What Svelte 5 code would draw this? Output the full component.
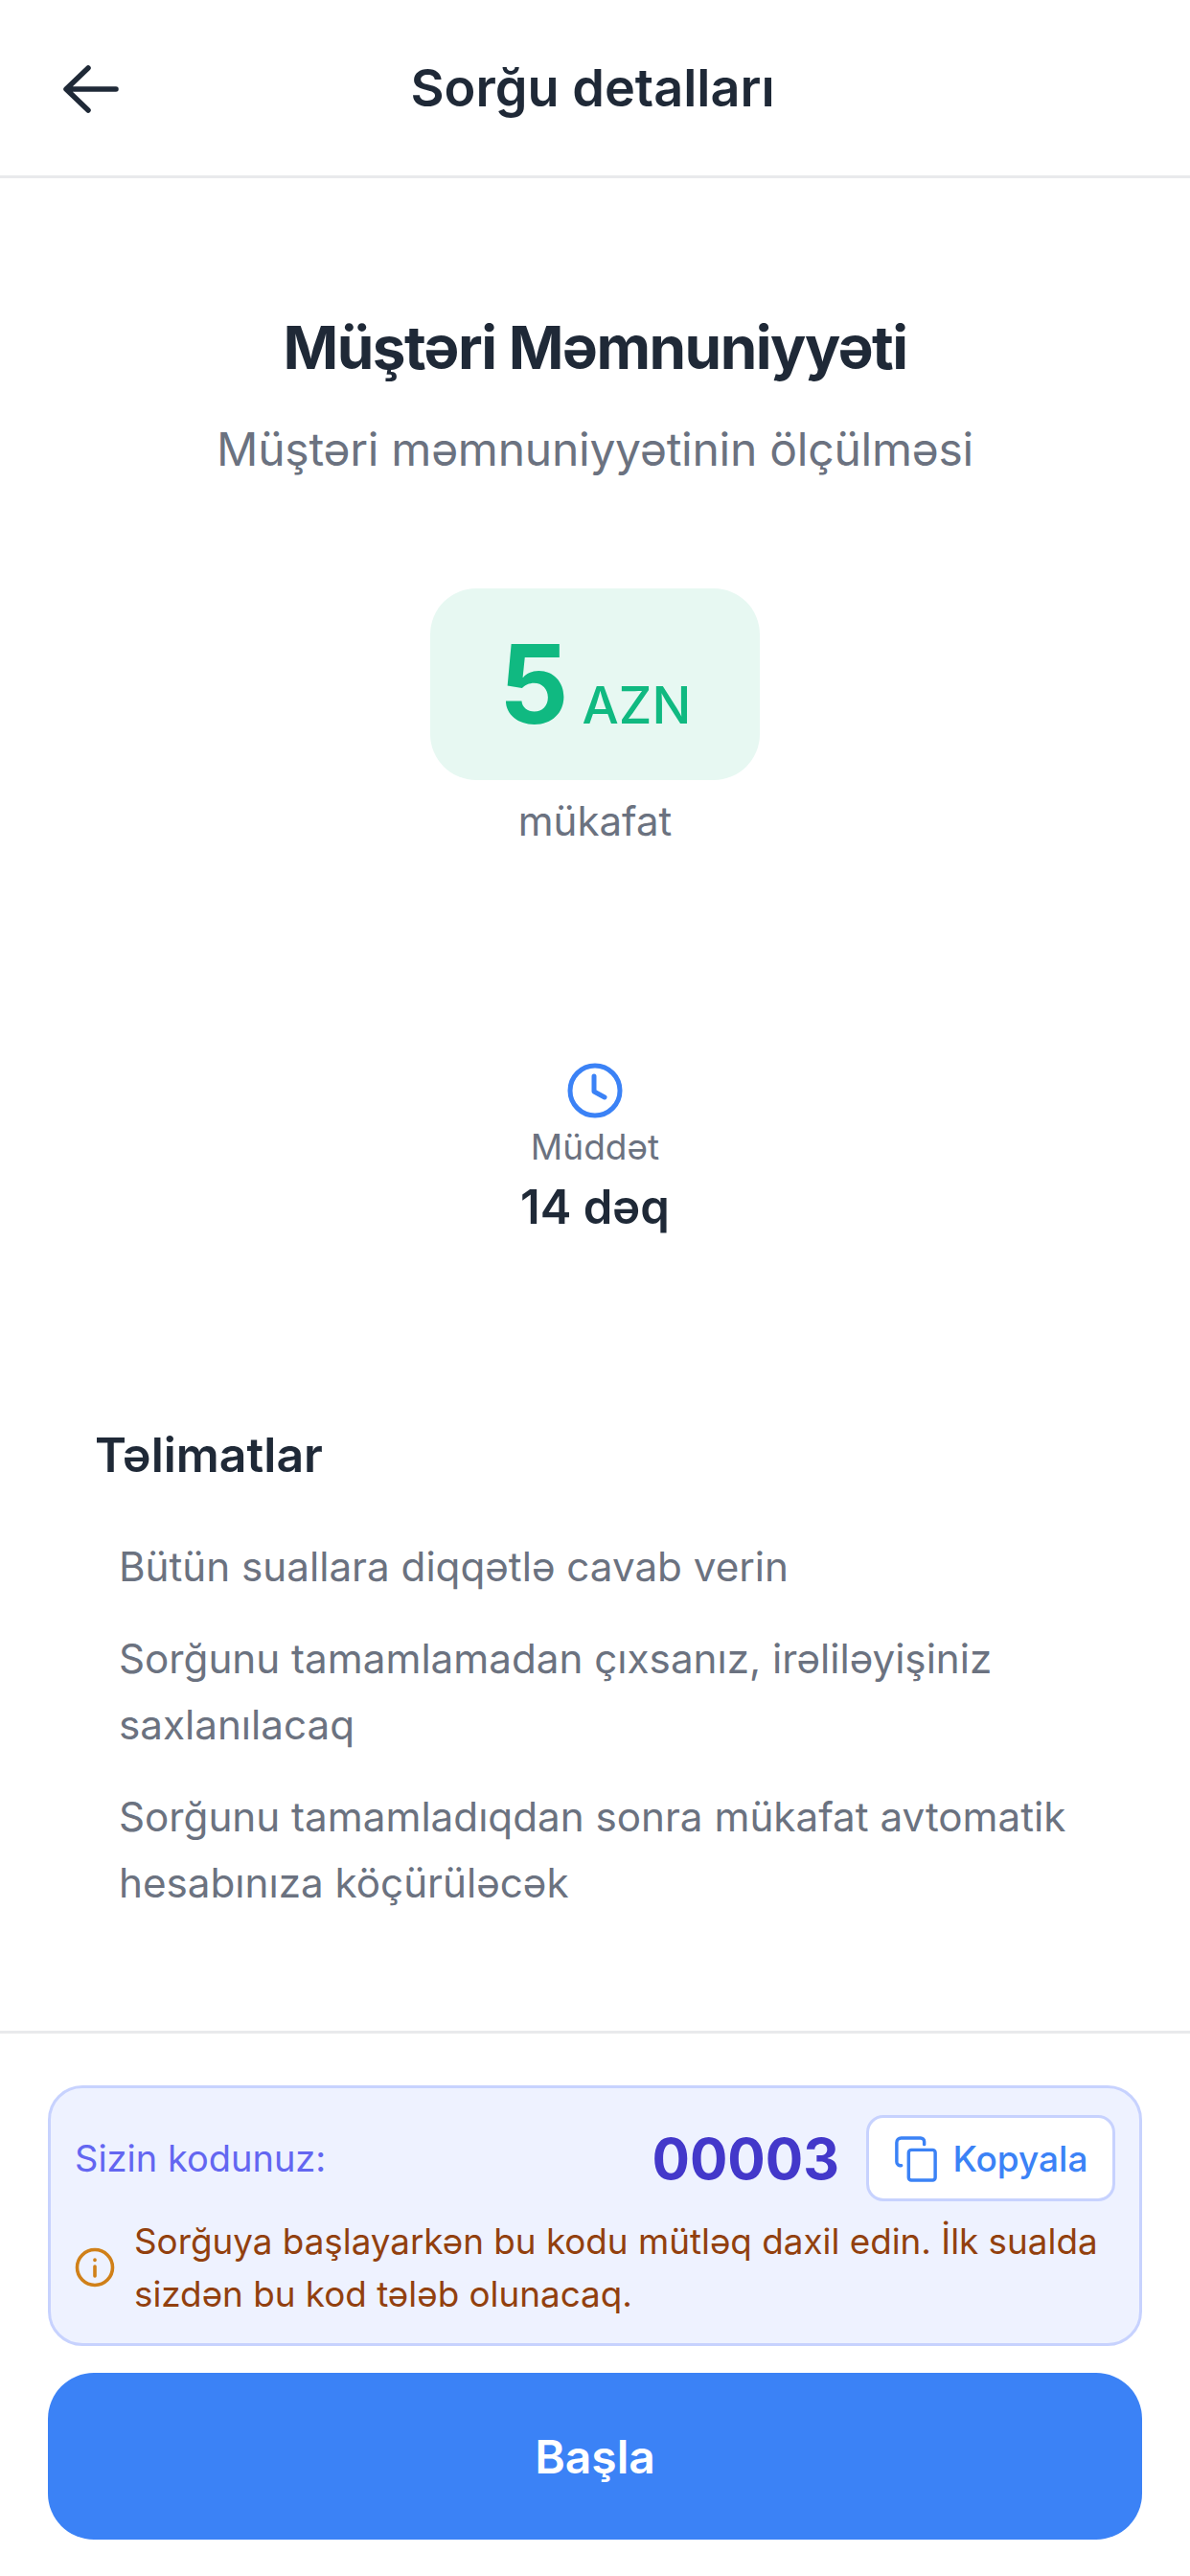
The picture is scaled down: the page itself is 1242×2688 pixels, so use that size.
<script>
  const instructions = [
    'Bütün suallara diqqətlə cavab verin',
    'Sorğunu tamamlamadan çıxsanız, irəliləyişiniz saxlanılacaq',
    'Sorğunu tamamladıqdan sonra mükafat avtomatik hesabınıza köçürüləcək'
  ];
</script>

<div class="page">
  <header class="header">
    <button class="back" aria-label="Geri">
      <svg viewBox="0 0 66 60" width="66" height="60" fill="none" stroke="#1f2937" stroke-width="5.5" stroke-linecap="round" stroke-linejoin="round">
        <path d="M59 30H8M30 8 7 30l23 22" />
      </svg>
    </button>
    <h1 class="header-title">Sorğu detalları</h1>
  </header>

  <main class="content">
    <section class="intro">
      <h2 class="title">Müştəri Məmnuniyyəti</h2>
      <p class="subtitle">Müştəri məmnuniyyətinin ölçülməsi</p>
    </section>

    <section class="reward">
      <div class="amount"><span class="num">5</span><span class="cur">AZN</span></div>
      <div class="reward-label">mükafat</div>
    </section>

    <section class="duration">
      <svg viewBox="0 0 60 60" width="60" height="60" fill="none" stroke="#3b82f6" stroke-width="5" stroke-linecap="round" stroke-linejoin="round">
        <circle cx="30" cy="30" r="26" />
        <path d="M29 15v16l11 6" />
      </svg>
      <div class="duration-label">Müddət</div>
      <div class="duration-value">14 dəq</div>
    </section>

    <section class="instructions">
      <h3 class="instructions-title">Təlimatlar</h3>
      <ul class="list">
        {#each instructions as item}
          <li>{item}</li>
        {/each}
      </ul>
    </section>
  </main>

  <footer class="footer">
    <div class="code-card">
      <div class="code-row">
        <span class="code-label">Sizin kodunuz:</span>
        <span class="code">00003</span>
        <button class="copy">
          <svg viewBox="0 0 48 52" width="46" height="50" fill="none" stroke="#3b82f6" stroke-width="3.6" stroke-linecap="round" stroke-linejoin="round">
            <rect x="16" y="17" width="29" height="33" rx="3" />
            <path d="M33 11V8a4 4 0 0 0-4-4H8a5 5 0 0 0-5 5v21a4 4 0 0 0 5 4" />
          </svg>
          <span>Kopyala</span>
        </button>
      </div>
      <div class="warning">
        <svg viewBox="0 0 42 42" width="42" height="42" fill="none" stroke="#d08019" stroke-width="3.6" stroke-linecap="round">
          <circle cx="21" cy="21" r="18.5" />
          <path d="M21 20v10" />
          <path d="M21 13v.5" />
        </svg>
        <p>Sorğuya başlayarkən bu kodu mütləq daxil edin. İlk sualda sizdən bu kod tələb olunacaq.</p>
      </div>
    </div>
    <button class="start">Başla</button>
  </footer>
</div>

<style>
  :global(body) {
    margin: 0;
    background: #fff;
  }
  .page {
    width: 1242px;
    height: 2688px;
    display: flex;
    flex-direction: column;
    font-family: Inter, "Noto Sans", sans-serif;
    color: #1f2937;
    background: #fff;
    overflow: hidden;
  }
  .header {
    height: 183px;
    flex: none;
    position: relative;
    display: flex;
    align-items: center;
    justify-content: center;
    border-bottom: 3px solid #e9eaec;
  }
  .back {
    position: absolute;
    left: 62px;
    top: 63px;
    padding: 0;
    border: 0;
    background: none;
    line-height: 0;
  }
  .header-title {
    margin: 0 5px 0 0;
    font-size: 54px;
    font-weight: 600;
    line-height: 1;
  }
  .content {
    flex: 1;
    display: flex;
    flex-direction: column;
    min-height: 0;
  }
  .intro {
    padding-top: 135px;
    text-align: center;
  }
  .title {
    margin: 0;
    font-size: 62px;
    letter-spacing: -1.5px;
    line-height: 84px;
    font-weight: 700;
  }
  .subtitle {
    margin: 30px 0 0;
    font-size: 48px;
    letter-spacing: -0.25px;
    line-height: 68px;
    color: #6b7280;
  }
  .reward {
    margin-top: 111px;
    display: flex;
    flex-direction: column;
    align-items: center;
  }
  .amount {
    width: 344px;
    height: 200px;
    border-radius: 48px;
    background: #e7f8f2;
    display: flex;
    align-items: baseline;
    justify-content: center;
    gap: 14px;
    color: #10b981;
    line-height: 200px;
  }
  .num {
    font-size: 114px;
    font-weight: 700;
  }
  .cur {
    font-size: 54px;
    font-weight: 500;
  }
  .reward-label {
    margin-top: 13px;
    font-size: 42px;
    line-height: 60px;
    color: #6b7280;
  }
  .duration {
    margin-top: 221px;
    display: flex;
    flex-direction: column;
    align-items: center;
  }
  .duration-label {
    margin-top: 2px;
    font-size: 37px;
    line-height: 54px;
    color: #6b7280;
  }
  .duration-value {
    margin-top: 3px;
    font-size: 49px;
    line-height: 66px;
    font-weight: 600;
  }
  .instructions {
    margin-top: 189px;
    padding: 0 66px 0 99px;
  }
  .instructions-title {
    margin: 0;
    font-size: 50px;
    line-height: 72px;
    font-weight: 600;
  }
  .list {
    list-style: none;
    margin: 46px 0 0;
    padding: 0 0 0 25px;
    display: flex;
    flex-direction: column;
    gap: 27px;
  }
  .list li {
    font-size: 42.2px;
    line-height: 69px;
    color: #6b7280;
  }
  .footer {
    flex: none;
    border-top: 3px solid #e9eaec;
    padding: 54px 50px 38px;
    display: flex;
    flex-direction: column;
    gap: 28px;
  }
  .code-card {
    box-sizing: border-box;
    height: 272px;
    padding: 28px 25px 0 25px;
    border: 3px solid #c7d2fe;
    border-radius: 36px;
    background: #eef2ff;
  }
  .code-row {
    display: flex;
    align-items: center;
    height: 90px;
  }
  .code-label {
    font-size: 38px;
    font-weight: 400;
    color: #6366f1;
    margin-right: auto;
  }
  .code {
    font-size: 58.5px;
    font-weight: 700;
    color: #4338ca;
    margin-right: 28px;
  }
  .copy {
    box-sizing: border-box;
    width: 260px;
    height: 90px;
    margin: 0;
    padding: 0;
    border: 3px solid #c7d2fe;
    border-radius: 18px;
    background: #fff;
    display: flex;
    align-items: center;
    justify-content: center;
    gap: 16px;
    font-family: inherit;
    font-size: 37px;
    font-weight: 500;
    color: #3b82f6;
  }
  .warning {
    margin-top: 14px;
    display: flex;
    align-items: center;
    gap: 20px;
  }
  .warning svg {
    flex: none;
  }
  .warning p {
    margin: 0;
    font-size: 36.8px;
    line-height: 55px;
    color: #92400e;
  }
  .start {
    height: 174px;
    border: 0;
    border-radius: 48px;
    background: #3b82f6;
    color: #fff;
    font-family: inherit;
    font-size: 48px;
    font-weight: 600;
  }
</style>
